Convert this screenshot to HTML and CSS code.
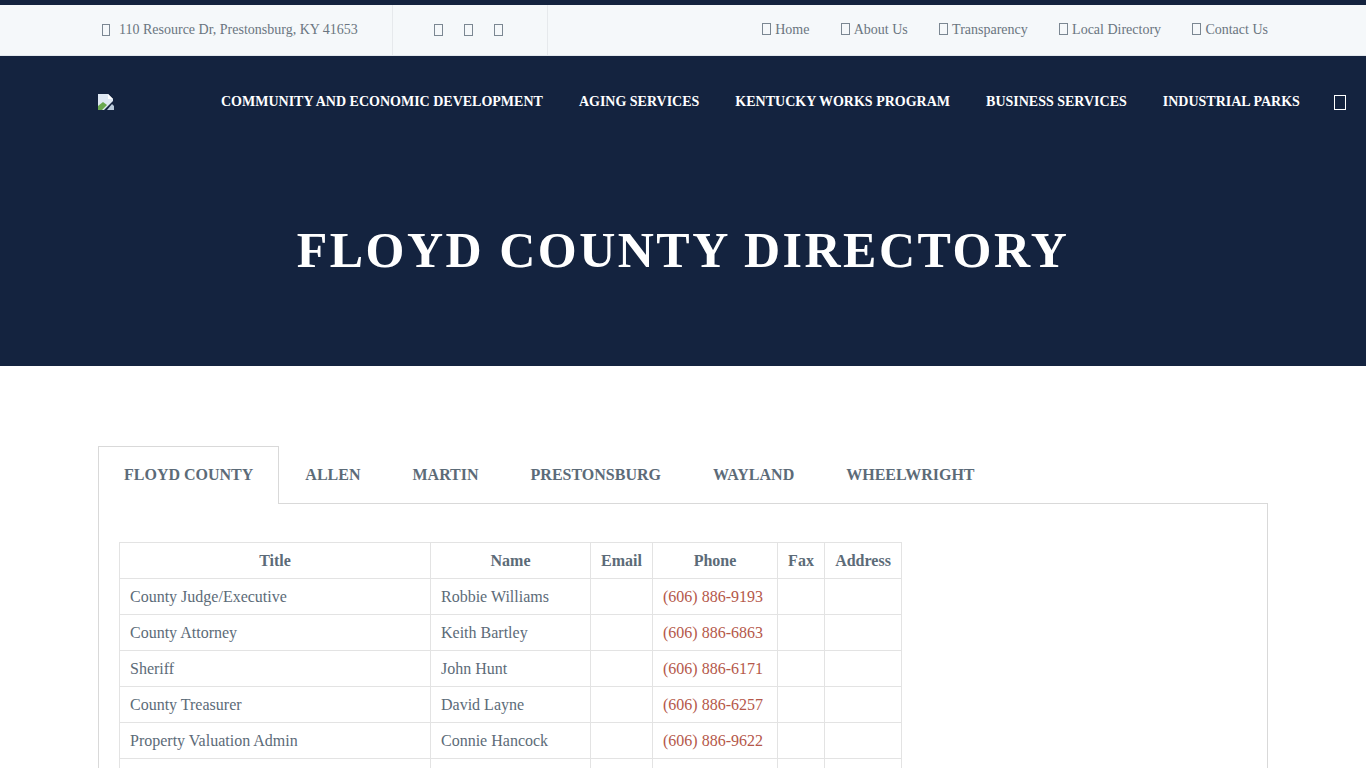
FILE: index.html
```html
<!DOCTYPE html>
<html lang="en">
<head>
<meta charset="utf-8">
<title>Floyd County Directory</title>
<link rel="stylesheet" href="styles.css">
</head>
<body>
<header class="topbar">
  <div class="container topbar-inner">
    <div class="address"><i class="tofu tofu-addr"></i>110 Resource Dr, Prestonsburg, KY 41653</div>
    <div class="social"><i class="tofu"></i><i class="tofu"></i><i class="tofu"></i></div>
    <nav class="toplinks">
      <a><i class="tofu"></i>Home</a>
      <a><i class="tofu"></i>About Us</a>
      <a><i class="tofu"></i>Transparency</a>
      <a><i class="tofu"></i>Local Directory</a>
      <a><i class="tofu"></i>Contact Us</a>
    </nav>
  </div>
</header>
<section class="hero">
  <div class="mainbar">
    <svg class="broken" width="16" height="16" viewBox="0 0 16 16" aria-hidden="true">
      <path d="M0 0H10L15 5V7L6 16H0Z" fill="#dfe8f3"/>
      <path d="M10 0V5H15Z" fill="#fff"/>
      <path d="M0 16V12L5 8L9 11L4 16Z" fill="#6aa84f"/>
      <path d="M14 10L16 12V16H9Z" fill="#b9c9da"/>
    </svg>
    <nav class="mainnav">
      <a>COMMUNITY AND ECONOMIC DEVELOPMENT</a>
      <a>AGING SERVICES</a>
      <a>KENTUCKY WORKS PROGRAM</a>
      <a>BUSINESS SERVICES</a>
      <a>INDUSTRIAL PARKS</a>
    </nav>
    <i class="tofu tofu-big"></i>
  </div>
  <h1>FLOYD COUNTY DIRECTORY</h1>
</section>
<main class="container content">
  <ul class="tabs">
    <li class="active">FLOYD COUNTY</li>
    <li>ALLEN</li>
    <li>MARTIN</li>
    <li>PRESTONSBURG</li>
    <li>WAYLAND</li>
    <li>WHEELWRIGHT</li>
  </ul>
  <div class="panel">
    <table>
      <thead>
        <tr><th class="c1">Title</th><th class="c2">Name</th><th class="c3">Email</th><th class="c4">Phone</th><th class="c5">Fax</th><th class="c6">Address</th></tr>
      </thead>
      <tbody>
        <tr><td>County Judge/Executive</td><td>Robbie Williams</td><td></td><td><a>(606) 886-9193</a></td><td></td><td></td></tr>
        <tr><td>County Attorney</td><td>Keith Bartley</td><td></td><td><a>(606) 886-6863</a></td><td></td><td></td></tr>
        <tr><td>Sheriff</td><td>John Hunt</td><td></td><td><a>(606) 886-6171</a></td><td></td><td></td></tr>
        <tr><td>County Treasurer</td><td>David Layne</td><td></td><td><a>(606) 886-6257</a></td><td></td><td></td></tr>
        <tr><td>Property Valuation Admin</td><td>Connie Hancock</td><td></td><td><a>(606) 886-9622</a></td><td></td><td></td></tr>
        <tr><td>&nbsp;</td><td></td><td></td><td></td><td></td><td></td></tr>
      </tbody>
    </table>
  </div>
</main>
</body>
</html>
```
FILE: styles.css
```css
* { box-sizing: border-box; }
html, body { margin: 0; height: 768px; overflow: hidden; }
body { font-family: "Liberation Serif", "Times New Roman", serif; color: #5c6b78; background: #fff; }
.container { width: 1170px; margin: 0 auto; }

.tofu { display: inline-block; width: 9px; height: 12px; border: 1px solid #7b8792; vertical-align: -1px; }

.topbar { height: 56px; background: #f5f8fa; border-top: 5px solid #14233f; border-bottom: 1px solid #e3e8ed; font-size: 14px; color: #6a7580; }
.topbar-inner { display: flex; align-items: stretch; height: 50px; }
.address { width: 295px; padding-left: 4px; display: flex; align-items: center; border-right: 1px solid #e6e9ec; }
.tofu-addr { width: 8px; margin-right: 9px; }
.social { width: 155px; padding-right: 3px; display: flex; align-items: center; justify-content: center; gap: 21px; border-right: 1px solid #e6e9ec; }
.toplinks { flex: 1; display: flex; align-items: center; justify-content: flex-end; gap: 31.3px; }
.toplinks .tofu { margin-right: 4px; }

.hero { height: 310px; background: #14233f; }
.mainbar { height: 90px; padding-top: 2px; padding-left: 98px; display: flex; align-items: center; }
.broken { flex: none; }
.mainnav { margin-left: 107px; display: flex; gap: 36px; font-size: 14px; font-weight: 700; color: #fff; white-space: nowrap; }
.tofu-big { width: 12px; height: 15px; border-color: #fff; margin-left: 34px; }
.hero h1 { margin: 0; padding-top: 74px; text-align: center; font-size: 50px; line-height: 60px; font-weight: 700; letter-spacing: 2.5px; color: #fff; }

.content { padding-top: 80px; }
.tabs { list-style: none; margin: 0; padding: 0; display: flex; font-size: 16px; font-weight: 700; color: #5c6b78; position: relative; z-index: 1; }
.tabs li { height: 58px; padding: 0 26px; display: flex; align-items: center; }
.tabs .active { background: #fff; border: 1px solid #d9d9d9; border-bottom: 0; padding: 0 25px 1px; }
.panel { border: 1px solid #d9d9d9; margin-top: -1px; padding: 38px 20px; height: 400px; }
table { border-collapse: collapse; font-size: 16px; }
th, td { border: 1px solid #e3e3e3; height: 36px; padding: 0 10px; white-space: nowrap; text-align: left; }
th { text-align: center; font-weight: 700; }
td a { color: #b5584a; }
.c1 { width: 311px; }
.c2 { width: 160px; }
.c3 { width: 62px; }
.c4 { width: 125px; }
.c5 { width: 47px; }
.c6 { width: 77px; }
```
